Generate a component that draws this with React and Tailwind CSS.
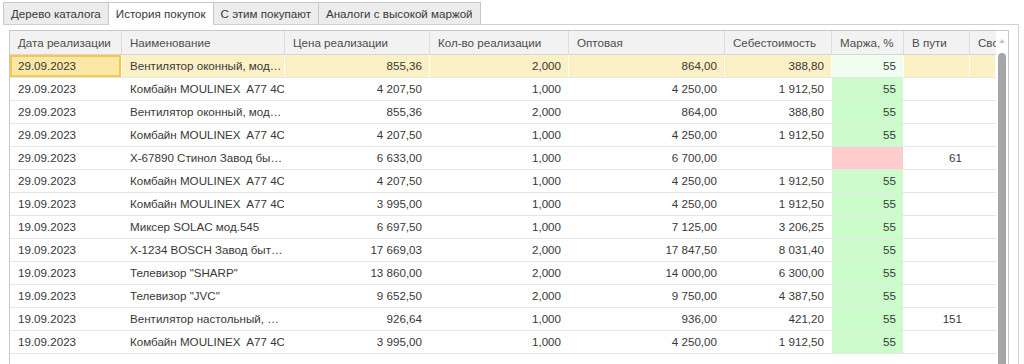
const tabs = ['Дерево каталога', 'История покупок', 'С этим покупают', 'Аналоги с высокой маржой'];

const columns = [
  { title: 'Дата реализации' },
  { title: 'Наименование' },
  { title: 'Цена реализации', right: true },
  { title: 'Кол-во реализации', right: true },
  { title: 'Оптовая', right: true },
  { title: 'Себестоимость', right: true },
  { title: 'Маржа, %', right: true },
  { title: 'В пути', right: true },
  { title: 'Сво', right: true },
];

const KOMB = 'Комбайн MOULINEX  A77 4C';
const VENT = 'Вентилятор оконный, мод…';

const rows = [
  ['29.09.2023', VENT, '855,36', '2,000', '864,00', '388,80', '55', ''],
  ['29.09.2023', KOMB, '4 207,50', '1,000', '4 250,00', '1 912,50', '55', ''],
  ['29.09.2023', VENT, '855,36', '2,000', '864,00', '388,80', '55', ''],
  ['29.09.2023', KOMB, '4 207,50', '1,000', '4 250,00', '1 912,50', '55', ''],
  ['29.09.2023', 'Х-67890 Стинол Завод бы…', '6 633,00', '1,000', '6 700,00', '', '', '61'],
  ['29.09.2023', KOMB, '4 207,50', '1,000', '4 250,00', '1 912,50', '55', ''],
  ['19.09.2023', KOMB, '3 995,00', '1,000', '4 250,00', '1 912,50', '55', ''],
  ['19.09.2023', 'Миксер SOLAC мод.545', '6 697,50', '1,000', '7 125,00', '3 206,25', '55', ''],
  ['19.09.2023', 'Х-1234 BOSCH Завод быт…', '17 669,03', '2,000', '17 847,50', '8 031,40', '55', ''],
  ['19.09.2023', 'Телевизор "SHARP"', '13 860,00', '2,000', '14 000,00', '6 300,00', '55', ''],
  ['19.09.2023', 'Телевизор "JVC"', '9 652,50', '2,000', '9 750,00', '4 387,50', '55', ''],
  ['19.09.2023', 'Вентилятор настольный, …', '926,64', '1,000', '936,00', '421,20', '55', '151'],
  ['19.09.2023', KOMB, '3 995,00', '1,000', '4 250,00', '1 912,50', '55', ''],
];

const grid = 'grid grid-cols-[112px_163px_145px_139px_156px_107px_72px_66px_26px]';

function cellBg(rowIdx, colIdx, row) {
  const selected = rowIdx === 0;
  if (colIdx === 6) {
    if (row[6] === '') return 'bg-[#ffcccc]';
    return selected ? 'bg-[#f0fef0]' : 'bg-[#ccfccc]';
  }
  if (selected) {
    if (colIdx === 0) return 'bg-[#fce7a5] shadow-[inset_0_0_0_2px_#f2c94c]';
    return 'bg-[#fcf0c5]';
  }
  return '';
}

export default function App() {
  return (
    <div className="w-[1024px] h-[364px] overflow-hidden bg-white text-[11.6px] text-[#383838] font-['Liberation_Sans',Arial,sans-serif]">
      {/* Tabs */}
      <div className="flex pl-[3px] pt-[2px] h-[24px]">
        {tabs.map((t, i) => (
          <div
            key={t}
            className={`-ml-px first:ml-0 px-[7px] flex items-center border border-[#c8c8c8] border-b-0 whitespace-nowrap ${i === 1 ? 'bg-white h-[23px] relative z-10' : 'bg-[#ececec] h-[22px]'}`}
          >
            {t}
          </div>
        ))}
      </div>

      {/* Panel */}
      <div className="ml-[3px] w-[1016px] h-[340px] border-t border-r border-[#d0d0d0] pt-[5px] pl-[6px]">
        <div className="w-[1000px] h-[400px] border border-[#c8c8c8] flex">
          <div className="w-[986px] flex flex-col">
            {/* Header */}
            <div className={`${grid} h-[24px] bg-[#f2f2f2] border-b border-[#d6d6d6] text-[#4d4d4d]`}>
              {columns.map((c, i) => (
                <div key={i} className="pl-[8px] flex items-center border-r border-[#dcdcdc] whitespace-nowrap overflow-hidden last:border-r-0">
                  {c.title}
                </div>
              ))}
            </div>
            {/* Rows */}
            {rows.map((row, r) => (
              <div key={r} className={`${grid} h-[23px] border-b border-[#e6e6e6] ${r === 0 ? 'bg-[#fcf0c5]' : ''}`}>
                {[...row, ''].map((v, c) => (
                  <div
                    key={c}
                    className={`flex items-center whitespace-pre overflow-hidden border-r border-white ${columns[c].right ? 'justify-end pr-[7px]' : 'pl-[8px]'} ${cellBg(r, c, row)}`}
                  >
                    {v}
                  </div>
                ))}
              </div>
            ))}
          </div>
          {/* Scrollbar */}
          <div className="w-[12px] flex flex-col items-center">
            <svg width="6" height="4" viewBox="0 0 6 4" className="mt-[8px]">
              <path d="M0 4 L3 0 L6 4 Z" fill="#c4c4c4" />
            </svg>
            <div className="mt-[10px] w-[8px] flex-1 rounded-t-[4px] bg-[#a6a6a6]" />
          </div>
        </div>
      </div>
    </div>
  );
}
